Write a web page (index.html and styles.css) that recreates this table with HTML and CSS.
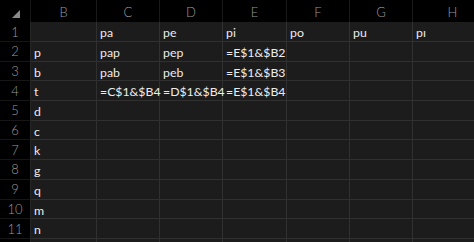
FILE: index.html
```html
<!DOCTYPE html>
<html lang="en">
<head>
    <meta charset="UTF-8">
    <title>Sheet1</title>
    <link rel="stylesheet" href="styles.css">
</head>
<body>
    <div class="sheet">
        <!-- column headers -->
        <div class="corner"><span class="select-all"></span></div>
        <div class="col-head">B</div>
        <div class="col-head">C</div>
        <div class="col-head">D</div>
        <div class="col-head">E</div>
        <div class="col-head">F</div>
        <div class="col-head">G</div>
        <div class="col-head">H</div>

        <div class="row-head">1</div>
        <div class="cell"></div>
        <div class="cell">pa</div>
        <div class="cell">pe</div>
        <div class="cell">pi</div>
        <div class="cell">po</div>
        <div class="cell">pu</div>
        <div class="cell">pı</div>

        <div class="row-head">2</div>
        <div class="cell">p</div>
        <div class="cell">pap</div>
        <div class="cell">pep</div>
        <div class="cell">=E$1&amp;$B2</div>
        <div class="cell"></div>
        <div class="cell"></div>
        <div class="cell"></div>

        <div class="row-head">3</div>
        <div class="cell">b</div>
        <div class="cell">pab</div>
        <div class="cell">peb</div>
        <div class="cell">=E$1&amp;$B3</div>
        <div class="cell"></div>
        <div class="cell"></div>
        <div class="cell"></div>

        <div class="row-head">4</div>
        <div class="cell">t</div>
        <div class="cell">=C$1&amp;$B4</div>
        <div class="cell">=D$1&amp;$B4</div>
        <div class="cell">=E$1&amp;$B4</div>
        <div class="cell"></div>
        <div class="cell"></div>
        <div class="cell"></div>

        <div class="row-head">5</div>
        <div class="cell">d</div>
        <div class="cell"></div><div class="cell"></div><div class="cell"></div>
        <div class="cell"></div><div class="cell"></div><div class="cell"></div>

        <div class="row-head">6</div>
        <div class="cell">c</div>
        <div class="cell"></div><div class="cell"></div><div class="cell"></div>
        <div class="cell"></div><div class="cell"></div><div class="cell"></div>

        <div class="row-head">7</div>
        <div class="cell">k</div>
        <div class="cell"></div><div class="cell"></div><div class="cell"></div>
        <div class="cell"></div><div class="cell"></div><div class="cell"></div>

        <div class="row-head">8</div>
        <div class="cell">g</div>
        <div class="cell"></div><div class="cell"></div><div class="cell"></div>
        <div class="cell"></div><div class="cell"></div><div class="cell"></div>

        <div class="row-head">9</div>
        <div class="cell">q</div>
        <div class="cell"></div><div class="cell"></div><div class="cell"></div>
        <div class="cell"></div><div class="cell"></div><div class="cell"></div>

        <div class="row-head">10</div>
        <div class="cell">m</div>
        <div class="cell"></div><div class="cell"></div><div class="cell"></div>
        <div class="cell"></div><div class="cell"></div><div class="cell"></div>

        <div class="row-head">11</div>
        <div class="cell">n</div>
        <div class="cell"></div><div class="cell"></div><div class="cell"></div>
        <div class="cell"></div><div class="cell"></div><div class="cell"></div>

        <!-- partly visible row at the bottom edge -->
        <div class="row-head"></div>
        <div class="cell"></div>
        <div class="cell"></div><div class="cell"></div><div class="cell"></div>
        <div class="cell"></div><div class="cell"></div><div class="cell"></div>
    </div>
</body>
</html>
```

FILE: styles.css
```css
body {
    margin: 0;
    background: #000;
    overflow: hidden;
    font-family: Lato, "Open Sans", sans-serif;
}
/* cell fill sits behind the whole grid so overflowing text isn't covered */
.sheet {
    display: grid;
    grid-template-columns: 31px 66px 63px 63px 64px 63px 63px 80px;
    grid-template-rows: 22px 20px repeat(11, 19.7px);
    background: linear-gradient(#000, #000) no-repeat 0 0 / 100% 22px,
                linear-gradient(#000, #000) no-repeat 0 0 / 31px 100%,
                #1c1c1c;
}
.corner {
    border-right: 1px solid #161616;
    box-sizing: border-box;
    position: relative;
}
.select-all {
    position: absolute;
    left: 12px;
    top: 10px;
    width: 0;
    height: 0;
    border-left: 8px solid transparent;
    border-bottom: 8px solid #8a8a8a;
}
.col-head {
    color: #9a9a9a;
    font-size: 13px;
    font-weight: 300;
    display: flex;
    align-items: center;
    justify-content: center;
    border-right: 1px solid #1a1a1a;
    box-sizing: border-box;
    padding-top: 2px;
}
.row-head {
    color: #9a9a9a;
    font-size: 13px;
    font-weight: 300;
    display: flex;
    align-items: center;
    justify-content: center;
    border-right: 1px solid #262626;
    border-bottom: 1px solid #161616;
    box-sizing: border-box;
}
.cell {
    color: #ececec;
    font-size: 12.3px;
    line-height: 14px;
    padding: 4px 0 0 3px;
    white-space: nowrap;
    border-right: 1px solid #303030;
    border-bottom: 1px solid #303030;
    box-sizing: border-box;
}
```
